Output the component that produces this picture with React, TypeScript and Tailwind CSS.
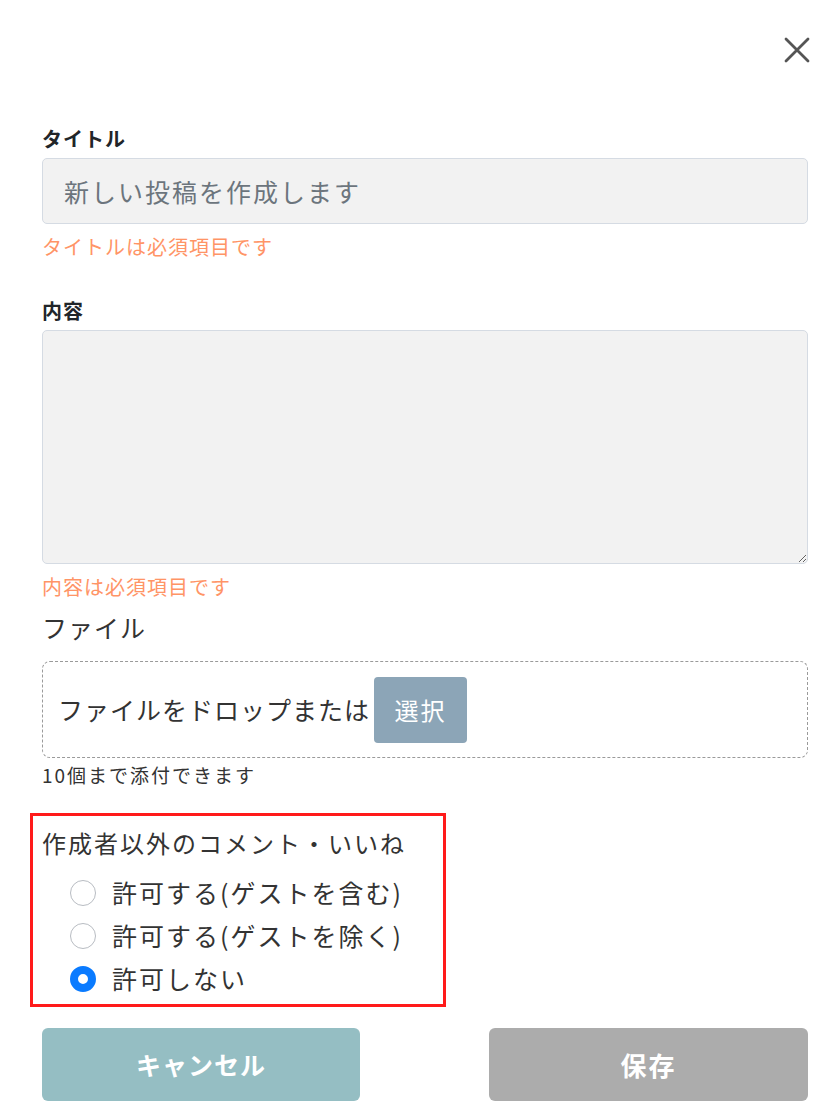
import { useState } from "react";

const options = ["許可する(ゲストを含む)", "許可する(ゲストを除く)", "許可しない"];

export default function App() {
  const [perm, setPerm] = useState(2);

  return (
    <div className="min-h-screen bg-white font-['Noto_Sans_CJK_JP','Noto_Sans',sans-serif] text-[#212529]">
      <div className="pl-[42px] pr-[14px] pt-[35px]">
        {/* close */}
        <div className="flex justify-end -mr-[4px]">
          <button className="w-[30px] h-[30px] flex items-center justify-center text-[#555]">
            <svg width="28" height="28" viewBox="0 0 28 28" fill="none" stroke="currentColor" strokeWidth="2.8" strokeLinecap="round">
              <path d="M3 3L25 25M25 3L3 25" />
            </svg>
          </button>
        </div>

        {/* タイトル */}
        <label className="block mt-[60px] text-[20px] leading-[28px] font-bold tracking-[1px]">タイトル</label>
        <input
          className="mt-[5px] w-full h-[66px] rounded-[5px] border border-[#d5dbe3] bg-[#f2f2f2] px-[21px] text-[25px] tracking-[2px] placeholder:text-[#6c757d] outline-none"
          placeholder="新しい投稿を作成します"
        />
        <p className="mt-[9px] text-[20px] leading-[28px] tracking-[1px] text-[#ff9466]">タイトルは必須項目です</p>

        {/* 内容 */}
        <label className="block mt-[36px] text-[20px] leading-[28px] font-bold tracking-[1px]">内容</label>
        <textarea className="block mt-[5px] w-full h-[234px] rounded-[5px] border border-[#d5dbe3] bg-[#f2f2f2] outline-none" />
        <p className="mt-[9px] text-[20px] leading-[28px] tracking-[1px] text-[#ff9466]">内容は必須項目です</p>

        {/* ファイル */}
        <p className="mt-[9px] text-[25px] leading-[34px] tracking-[1px] text-[#333]">ファイル</p>
        <div className="mt-[17px] h-[97px] rounded-[8px] border border-dashed border-[#9a9a9a] flex items-center pl-[15px]">
          <span className="text-[25px] tracking-[1px] text-[#333]">ファイルをドロップまたは</span>
          <button className="ml-[4px] w-[93px] h-[66px] rounded-[4px] bg-[#8ca5b7] text-white text-[24px] tracking-[2px]">選択</button>
        </div>
        <p className="mt-[4px] text-[19px] leading-[26px] tracking-[2px] text-[#333]">10個まで添付できます</p>

        {/* 作成者以外のコメント・いいね */}
        <div className="mt-[25px] -ml-[12px] w-[416px] h-[194px] border-[3px] border-[#ff1a1a] pl-[9px] pt-[10px]">
          <p className="text-[24px] leading-[34px] tracking-[2px] text-[#333]">作成者以外のコメント・いいね</p>
          <div className="mt-[11px] pl-[28px]">
            {options.map((o, i) => (
              <label key={o} className="flex items-center h-[43px] cursor-pointer" onClick={() => setPerm(i)}>
                {perm === i ? (
                  <span className="w-[26px] h-[26px] rounded-full border-[8px] border-[#0a7bff] bg-white" />
                ) : (
                  <span className="w-[26px] h-[26px] rounded-full border border-[#b8bcc2] bg-white" />
                )}
                <span className="ml-[16px] text-[25px] tracking-[2px] text-[#333]">{o}</span>
              </label>
            ))}
          </div>
        </div>

        {/* buttons */}
        <div className="mt-[21px] flex justify-between">
          <button className="w-[318px] h-[73px] rounded-[6px] bg-[#95bec3] text-white text-[25px] font-bold tracking-[1px]">キャンセル</button>
          <button className="w-[319px] h-[73px] rounded-[6px] bg-[#acacac] text-white text-[26px] font-bold tracking-[2px]">保存</button>
        </div>
      </div>
    </div>
  );
}
